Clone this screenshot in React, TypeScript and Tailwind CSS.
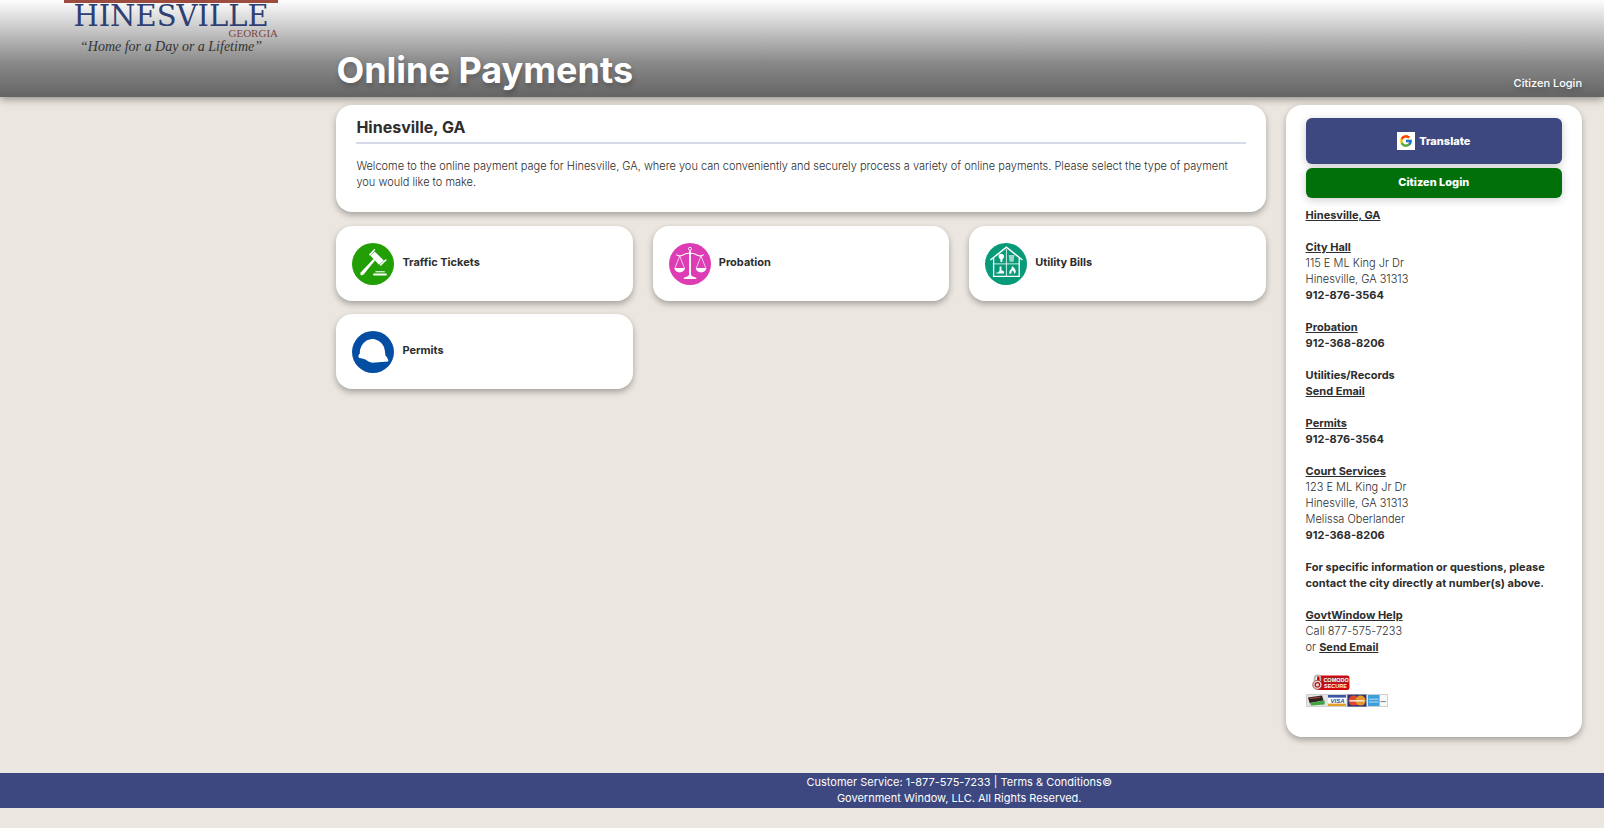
import type { ReactNode } from 'react';
import { FcGoogle } from 'react-icons/fc';

interface PaymentType {
  id: string;
  label: string;
  icon: ReactNode;
}

interface Contact {
  title: string;
  linked: boolean;
  lines?: string[];
  phone?: string;
  email?: boolean;
}

const GavelIcon = () => (
  <svg viewBox="0 0 42 42" className="w-[42px] h-[42px] shrink-0" aria-hidden="true">
    <circle cx="21" cy="21" r="21" fill="#229f05" />
    <path d="M23 17.6 L11.6 31.6 Q9.4 33 8.4 31.4 Q7.8 29.8 9.6 28.6 L21.4 16z" fill="#fff" />
    <path d="M22.6 8.4 L31.8 17.4 L27 21.8 L18.4 12.8z" fill="#fff" />
    <path d="M18 11.6 L22.4 6.8 M28.6 22 L33.8 17" stroke="#fff" strokeWidth="1.6" strokeLinecap="round" />
    <rect x="23.4" y="28" width="9.4" height="1.4" fill="#c9e8c0" />
    <rect x="21.2" y="30.4" width="13.6" height="2" rx="0.6" fill="#fff" />
  </svg>
);

const ScalesIcon = () => (
  <svg viewBox="0 0 42 42" className="w-[42px] h-[42px] shrink-0" aria-hidden="true">
    <circle cx="21" cy="21" r="21" fill="#dc3cb4" />
    <g fill="none" stroke="#fff">
      <circle cx="21" cy="5.8" r="1.5" strokeWidth="0.9" />
      <path d="M7.3 11.6 Q10 14 14 12 Q18 9.6 21 10.4 Q24 9.6 28 12 Q32 14 34.7 11.6" strokeWidth="1.1" />
      <path d="M10.7 13 L6 25 M10.7 13 L15.4 25 M32 13 L27.4 25 M32 13 L36.8 25" strokeWidth="0.7" />
      <path d="M21 7.4 V34" strokeWidth="1.9" />
    </g>
    <path d="M5.3 25 H16 Q15 29.4 10.7 29.4 Q6.3 29.4 5.3 25z" fill="#fff" />
    <path d="M26.7 25 H37.5 Q36.4 29.4 32.1 29.4 Q27.7 29.4 26.7 25z" fill="#fff" />
    <path d="M14.3 36 Q15 34 18.4 33.6 L20 32 H22 L23.6 33.6 Q27 34 27.7 36z" fill="#fff" />
  </svg>
);

const HouseIcon = () => (
  <svg viewBox="0 0 42 42" className="w-[42px] h-[42px] shrink-0" aria-hidden="true">
    <circle cx="21" cy="21" r="21" fill="#069a78" />
    <path d="M5.4 17 L21.4 4.2 L37.4 17" fill="none" stroke="#fff" strokeWidth="1.5" />
    <path d="M8.6 15 V33.4 H34.2 V15" fill="none" stroke="#fff" strokeWidth="1.3" />
    <path d="M21.4 6 V33 M9 20.9 H34" fill="none" stroke="#e4f6f0" strokeWidth="0.9" />
    <path d="M13.4 13 Q14 10.8 16.3 10.8 Q18.8 10.8 19.2 13.4 Q19 15 17.4 16.4 V19 H15.4 V16.4 Q13.6 15.2 13.4 13z" fill="#fff" />
    <path d="M23.6 12 H29.4 L28.6 18.8 H24.6z" fill="#9ed6c6" />
    <path d="M14.6 23.4 H16.4 V27 L19 28.6 V30.6 H11.4 V29.6 H13.4 L14.6 27.4z" fill="#fff" />
    <path d="M27 23 Q31 26 30.8 29 L29.6 31 L28.2 28 L26.8 27.6 L26.4 30.6 L24.6 31 Q23.6 28 26.4 26z" fill="#fff" />
  </svg>
);

const HelmetIcon = () => (
  <svg viewBox="0 0 42 42" className="w-[42px] h-[42px] shrink-0" aria-hidden="true">
    <circle cx="21" cy="21" r="21" fill="#034ea2" />
    <path
      d="M6.4 24.4 L7.8 22.4 Q7.6 14 14.6 9.4 Q17 8.6 18 8.6 L19.4 8 H22 L24 8.8 Q29 10 32 16 Q33.2 20 33.4 24.6 L35 26.2 L36.4 29.6 L36 30.6 L20 31.8 L16.4 30.6 Q13.6 28 10 27.4 L6.8 26.8z"
      fill="#fff"
    />
  </svg>
);

const SecureBadge = () => (
  <svg viewBox="0 0 38 17" className="w-[38px] h-[17px] ml-1.5" role="img" aria-label="Comodo Secure">
    <rect x="5" y="1.4" width="32.4" height="14.6" rx="2" fill="#d0060c" />
    <rect x="11" y="3.4" width="25" height="5.4" fill="#9a2a2a" />
    <path d="M2.6 7 V4.6 Q2.8 1.4 5.6 1.4 Q8.4 1.4 8.4 4.6 V7" fill="none" stroke="#b5b5b5" strokeWidth="1.8" />
    <circle cx="5.4" cy="10.8" r="4.6" fill="#e9d5d5" stroke="#8a2f2f" strokeWidth="0.8" />
    <circle cx="5.4" cy="10.8" r="2.2" fill="none" stroke="#b3141a" strokeWidth="1.2" />
    <text x="11.4" y="8" fontSize="5.5" fontWeight="700" fill="#fff" fontFamily="Liberation Sans, sans-serif">COMODO</text>
    <text x="12" y="14" fontSize="5.5" fontWeight="700" fill="#fff" fontFamily="Liberation Sans, sans-serif">SECURE</text>
  </svg>
);

const CardBadges = () => (
  <svg viewBox="0 0 82 13" className="w-[82px] h-[13px]" role="img" aria-label="Accepted cards">
    <rect x="0.5" y="0.5" width="81" height="12" fill="#e4e4e4" stroke="#cfcfcf" />
    <path d="M2 3.6 L16 1.6 L17.6 6.4 L3.6 9z" fill="#2c2420" />
    <path d="M4 9 L18.6 6.6 V10.6 L5 11.6z" fill="#3fa540" />
    <path d="M4 4.6 L14.4 3.2" stroke="#b8432f" strokeWidth="1" />
    <rect x="22" y="1" width="18" height="11" fill="#fff" />
    <rect x="22" y="1" width="18" height="2.6" fill="#3a55a4" />
    <rect x="22" y="9.6" width="18" height="2.4" fill="#e3a02c" />
    <text x="24.6" y="9" fontSize="6" fontWeight="700" fontStyle="italic" fill="#2b4ba0" fontFamily="Liberation Sans, sans-serif">VISA</text>
    <rect x="41.4" y="0.6" width="19" height="12" fill="#2f3470" />
    <circle cx="47.6" cy="6.6" r="5" fill="#e2452f" />
    <circle cx="54.6" cy="6.6" r="5" fill="#e8982a" />
    <path d="M43.6 6.8 H58.4" stroke="#fbe3d0" strokeWidth="1.6" />
    <rect x="62" y="1" width="19" height="11" fill="#f6f8fa" />
    <rect x="62" y="1" width="11.6" height="11" fill="#3d9edc" />
    <path d="M63 5.2 H72.6 M63 8 H72.6" stroke="#b9def4" strokeWidth="1" />
    <path d="M74.4 7.6 H80" stroke="#777" strokeWidth="0.9" />
  </svg>
);

const paymentTypes: PaymentType[] = [
  { id: 'traffic', label: 'Traffic Tickets', icon: <GavelIcon /> },
  { id: 'probation', label: 'Probation', icon: <ScalesIcon /> },
  { id: 'utility', label: 'Utility Bills', icon: <HouseIcon /> },
  { id: 'permits', label: 'Permits', icon: <HelmetIcon /> },
];

const contacts: Contact[] = [
  { title: 'Hinesville, GA', linked: true },
  { title: 'City Hall', linked: true, lines: ['115 E ML King Jr Dr', 'Hinesville, GA 31313'], phone: '912-876-3564' },
  { title: 'Probation', linked: true, phone: '912-368-8206' },
  { title: 'Utilities/Records', linked: false, email: true },
  { title: 'Permits', linked: true, phone: '912-876-3564' },
  {
    title: 'Court Services',
    linked: true,
    lines: ['123 E ML King Jr Dr', 'Hinesville, GA 31313', 'Melissa Oberlander'],
    phone: '912-368-8206',
  },
];

function Header() {
  return (
    <header className="h-[97px] pl-5 pr-[22px] grid grid-cols-5 gap-x-5 bg-[linear-gradient(#fdfdfd_0%,#c6c6c6_31%,#8a8a8a_64%,#646464_100%)] shadow-[0_2px_8px_rgba(0,0,0,0.4)]">
      <div className="w-[214px] ml-11 border-t-3 border-[#9b4c3f]">
        <div className="font-['DejaVu_Serif',serif] text-[29px] leading-[26px] text-center text-[#2e3f73]">HINESVILLE</div>
        <div className="font-['Liberation_Serif',serif] text-[11px] leading-2 text-right text-[#7a4840]">GEORGIA</div>
        <div className="font-['Liberation_Serif',serif] italic text-sm leading-5 text-center text-[#333]">
          “Home for a Day or a Lifetime”
        </div>
      </div>
      <div className="col-span-4 flex items-end justify-between pb-1.5">
        <h1 className="text-4xl leading-[42px] font-bold text-white [text-shadow:1px_3px_5px_rgba(0,0,0,0.25)]">
          Online Payments
        </h1>
        <a href="#login" className="text-[11px] leading-4 font-medium text-white [text-shadow:1px_3px_5px_rgba(0,0,0,0.25)]">
          Citizen Login
        </a>
      </div>
    </header>
  );
}

function Sidebar() {
  return (
    <aside className="bg-white rounded-2xl px-5 pt-[13px] pb-[30px] shadow-[0_3px_6px_rgba(0,0,0,0.3)]">
      <button className="w-full h-[46px] flex items-center justify-center gap-1 rounded-md bg-[#3c487f] text-white font-extrabold shadow-[0_2px_8px_rgba(0,0,0,0.2)]">
        <span className="w-[18px] h-[18px] flex items-center justify-center bg-white">
          <FcGoogle className="w-3.5 h-3.5" />
        </span>
        Translate
      </button>
      <button className="w-full h-[30px] mt-1 mb-[9px] pb-0.5 block rounded-md bg-[#02700a] text-white font-extrabold shadow-[0_2px_8px_rgba(0,0,0,0.2)]">
        Citizen Login
      </button>

      <div className="space-y-4">
        {contacts.map((contact) => (
          <div key={contact.title}>
            <p className="font-bold">
              {contact.linked ? <a href="#contact" className="underline">{contact.title}</a> : contact.title}
            </p>
            {contact.lines?.map((line) => (
              <p key={line} className="font-light">{line}</p>
            ))}
            {contact.phone && <p className="font-bold">{contact.phone}</p>}
            {contact.email && (
              <p><a href="#email" className="font-bold underline">Send Email</a></p>
            )}
          </div>
        ))}

        <p className="font-bold">
          For specific information or questions, please contact the city directly at number(s) above.
        </p>

        <div className="font-light">
          <p><a href="#help" className="font-bold underline">GovtWindow Help</a></p>
          <p>Call 877-575-7233</p>
          <p>or <a href="#email" className="font-bold underline">Send Email</a></p>
        </div>
      </div>

      <div className="mt-[19px] flex flex-col gap-[3px]">
        <SecureBadge />
        <CardBadges />
      </div>
    </aside>
  );
}

export default function App() {
  return (
    <div className="min-h-screen bg-[#ebe6df] font-['Inter',sans-serif] text-[11px] leading-4 text-[#2d2d2d]">
      <Header />

      <div className="pl-5 pr-[22px] pt-2 grid grid-cols-5 items-start gap-x-5">
        <main className="col-start-2 col-span-3">
          <section className="bg-white rounded-2xl px-5 pt-[11px] pb-[22px] shadow-[0_3px_6px_rgba(0,0,0,0.3)]">
            <h2 className="pb-1 border-b-2 border-[#d5d9e8] text-base leading-[22px] font-bold">Hinesville, GA</h2>
            <p className="mt-3.5 font-light">
              Welcome to the online payment page for Hinesville, GA, where you can conveniently and securely process a
              variety of online payments. Please select the type of payment you would like to make.
            </p>
          </section>

          <div className="mt-3.5 grid grid-cols-3 gap-x-5 gap-y-[13px]">
            {paymentTypes.map((type) => (
              <a
                key={type.id}
                href={`#${type.id}`}
                className="h-[75px] flex items-center gap-2 px-4 bg-white rounded-2xl font-bold shadow-[0_3px_6px_rgba(0,0,0,0.3)]"
              >
                {type.icon}
                <span className="pb-1">{type.label}</span>
              </a>
            ))}
          </div>
        </main>

        <Sidebar />
      </div>

      <footer className="mt-9 pl-5 pr-[22px] pt-px pb-0.5 grid grid-cols-5 gap-x-5 bg-[#3c487f] text-white text-center">
        <p className="col-start-2 col-span-4">
          Customer Service: 1-877-575-7233 | <a href="#terms">Terms &amp; Conditions</a>©<br />
          Government Window, LLC. All Rights Reserved.
        </p>
      </footer>
    </div>
  );
}
